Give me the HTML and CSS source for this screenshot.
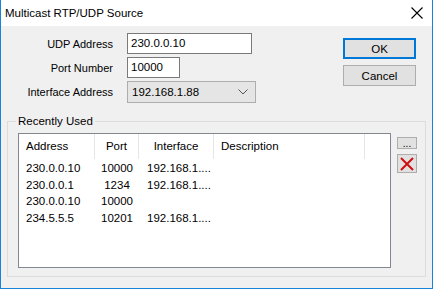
FILE: index.html
```html
<!DOCTYPE html>
<html lang="en">
<head>
    <meta charset="UTF-8">
    <title>Multicast RTP/UDP Source</title>
    <link rel="stylesheet" href="styles.css">
</head>
<body>
    <div class="window">
        <div class="titlebar">
            <span class="title">Multicast RTP/UDP Source</span>
            <svg class="close" width="12" height="12" viewBox="0 0 12 12">
                <path d="M0.5 0.5 L11.5 11.5 M11.5 0.5 L0.5 11.5" stroke="#000" stroke-width="1.1" fill="none"/>
            </svg>
        </div>

        <div class="top">
            <div class="fields">
                <label class="field-label">UDP Address</label>
                <div class="textbox wide">230.0.0.10</div>
                <label class="field-label">Port Number</label>
                <div class="textbox narrow">10000</div>
                <label class="field-label">Interface Address</label>
                <div class="combo">
                    <span>192.168.1.88</span>
                    <svg width="10" height="6" viewBox="0 0 10 6">
                        <path d="M0.5 0.5 L5 5 L9.5 0.5" stroke="#555" stroke-width="1" fill="none"/>
                    </svg>
                </div>
            </div>
            <div class="actions">
                <button class="btn default">OK</button>
                <button class="btn">Cancel</button>
            </div>
        </div>

        <fieldset class="group">
            <legend>Recently Used</legend>
            <div class="group-body">
                <div class="listview">
                    <div class="row header">
                        <div class="col c-addr">Address</div>
                        <div class="col c-port">Port</div>
                        <div class="col c-iface">Interface</div>
                        <div class="col c-desc">Description</div>
                    </div>
                    <div class="row">
                        <div class="col c-addr">230.0.0.10</div>
                        <div class="col c-port">10000</div>
                        <div class="col c-iface">192.168.1....</div>
                        <div class="col c-desc"></div>
                    </div>
                    <div class="row">
                        <div class="col c-addr">230.0.0.1</div>
                        <div class="col c-port">1234</div>
                        <div class="col c-iface">192.168.1....</div>
                        <div class="col c-desc"></div>
                    </div>
                    <div class="row">
                        <div class="col c-addr">230.0.0.10</div>
                        <div class="col c-port">10000</div>
                        <div class="col c-iface"></div>
                        <div class="col c-desc"></div>
                    </div>
                    <div class="row">
                        <div class="col c-addr">234.5.5.5</div>
                        <div class="col c-port">10201</div>
                        <div class="col c-iface">192.168.1....</div>
                        <div class="col c-desc"></div>
                    </div>
                </div>
                <div class="side-buttons">
                    <button class="mini dots">...</button>
                    <button class="mini delete">
                        <svg width="16" height="16" viewBox="0 0 16 16">
                            <path d="M2 2 L14 14 M14 2 L2 14" stroke="#d01010" stroke-width="2" fill="none"/>
                        </svg>
                    </button>
                </div>
            </div>
        </fieldset>
    </div>
</body>
</html>
```

FILE: styles.css
```css
body {
    margin: 0;
    font-family: "Liberation Sans", Arial, sans-serif;
    font-size: 11px;
    color: #000;
}

.window {
    width: 433px;
    height: 289px;
    box-sizing: border-box;
    border: 1px solid #1883d7;
    border-top: none;
    background: #f0f0f0;
}

.titlebar {
    height: 26px;
    background: #fff;
    display: flex;
    align-items: center;
    justify-content: space-between;
    padding: 0 9px 0 4px;
}

.title {
    font-size: 11.5px;
}

.top {
    display: flex;
    justify-content: space-between;
    padding: 7px 16px 0 0;
}

.fields {
    display: grid;
    grid-template-columns: 112px auto;
    column-gap: 14px;
    row-gap: 3px;
    align-items: center;
    justify-items: start;
}

.field-label {
    justify-self: end;
}

.textbox {
    height: 21px;
    box-sizing: border-box;
    border: 1px solid #7a7a7a;
    background: #fff;
    padding: 0 3px;
    line-height: 19px;
    font-size: 11.5px;
}

.wide {
    width: 125px;
}

.narrow {
    width: 53px;
}

.combo {
    width: 129px;
    height: 22px;
    box-sizing: border-box;
    border: 1px solid #adadad;
    background: #e5e5e5;
    display: flex;
    align-items: center;
    justify-content: space-between;
    padding: 0 7px 0 4px;
    font-size: 11.5px;
}

.actions {
    display: flex;
    flex-direction: column;
    gap: 6px;
    padding-top: 5px;
}

.btn {
    width: 73px;
    height: 21px;
    box-sizing: border-box;
    border: 1px solid #adadad;
    background: #e1e1e1;
    font-family: inherit;
    font-size: 11.5px;
    padding: 0;
}

.btn.default {
    border: 2px solid #0078d7;
}

.group {
    margin: 12px 6px 0 6px;
    padding: 0 0 6px 10px;
    border: 1px solid #dcdcdc;
    height: 162px;
    box-sizing: border-box;
}

.group legend {
    padding: 0 2px;
    margin-left: -2px;
    font-size: 11.5px;
}

.group-body {
    display: flex;
    gap: 6px;
    margin-top: 6px;
}

.listview {
    width: 373px;
    height: 135px;
    box-sizing: border-box;
    border: 1px solid #828790;
    background: #fff;
}

.row {
    display: flex;
    height: 16.7px;
    line-height: 16.7px;
    font-size: 11.5px;
}

.row.header {
    height: 25px;
    line-height: 25px;
    margin-bottom: 1px;
}

.header .col {
    border-right: 1px solid #e5e5e5;
}

.col {
    box-sizing: border-box;
    white-space: nowrap;
    overflow: hidden;
}

.c-addr {
    width: 76px;
    padding-left: 7px;
}

.c-port {
    width: 44px;
    text-align: center;
}

.c-iface {
    width: 75px;
    padding-left: 8px;
}

.header .c-iface {
    text-align: center;
    padding-left: 0;
}

.c-desc {
    width: 151px;
    padding-left: 7px;
}

.side-buttons {
    display: flex;
    flex-direction: column;
    gap: 5px;
    padding-top: 4px;
}

.mini {
    width: 20px;
    box-sizing: border-box;
    border: 1px solid #adadad;
    background: #e1e1e1;
    padding: 0;
    font-family: inherit;
    display: flex;
    align-items: center;
    justify-content: center;
}

.dots {
    height: 12px;
    font-size: 10px;
    line-height: 8px;
    align-items: flex-end;
}

.delete {
    height: 19px;
}
```
